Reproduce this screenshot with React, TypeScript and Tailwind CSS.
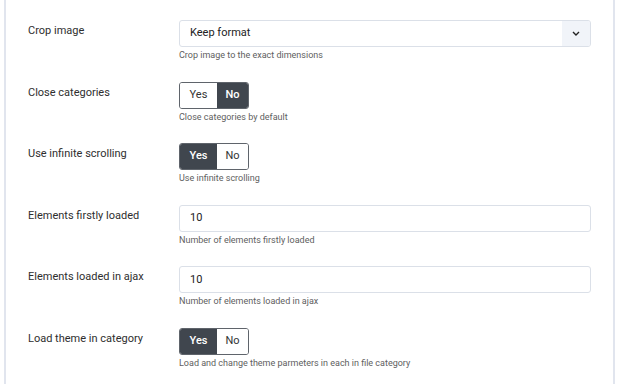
import React from 'react';

const font = { fontFamily: 'Roboto, "Liberation Sans", sans-serif' };

// --- Row ---
const Row: React.FC<{ label: string; help: string; children: React.ReactNode }> = ({ label, help, children }) => (
  <div className="flex h-[61.6px]">
    <div className="w-[151px] shrink-0 pt-[4px] text-[11px] leading-[14px] text-[#2e2e2e]">{label}</div>
    <div className="w-[412px] flex flex-col">
      {children}
      <div className="mt-[2px] text-[9px] leading-[12px] text-[#606060]">{help}</div>
    </div>
  </div>
);

// --- Toggle ---
const Toggle: React.FC<{ value: boolean }> = ({ value }) => {
  const on = 'bg-[#40464e] text-white font-medium';
  const off = 'bg-white text-[#333]';
  return (
    <div className="flex w-[70px] h-[27px] border border-[#5f646b] rounded-[3px] overflow-hidden text-[11px]">
      <div className={`w-[37px] flex items-center justify-center ${value ? on : off}`}>Yes</div>
      <div className={`flex-1 flex items-center justify-center ${value ? off : on}`}>No</div>
    </div>
  );
};

// --- Text input ---
const TextBox: React.FC<{ value: string }> = ({ value }) => (
  <div className="h-[27px] border border-[#dbe0e8] rounded-[3px] bg-white flex items-center pl-[10px] text-[11px] text-[#222]">
    {value}
  </div>
);

const SelectBox: React.FC<{ value: string }> = ({ value }) => (
  <div className="h-[27px] border border-[#dbe0e8] rounded-[3px] bg-white flex items-center text-[11px] text-[#222] overflow-hidden">
    <div className="flex-1 pl-[10px]">{value}</div>
    <div className="w-[28px] h-full bg-[#f1f4f9] flex items-center justify-center">
      <svg width="8" height="5" viewBox="0 0 8 5" fill="none">
        <path d="M1 1l3 3 3-3" stroke="#222" strokeWidth="1.4" />
      </svg>
    </div>
  </div>
);

export default function App() {
  return (
    <div className="w-[620px] h-[384px] bg-white overflow-hidden" style={font}>
      <div className="ml-[4px] w-[611px] h-full border-x-2 border-[#e1e5ee] pl-[22px] pt-[20px]">
        <Row label="Crop image" help="Crop image to the exact dimensions">
          <SelectBox value="Keep format" />
        </Row>
        <Row label="Close categories" help="Close categories by default">
          <Toggle value={false} />
        </Row>
        <Row label="Use infinite scrolling" help="Use infinite scrolling">
          <Toggle value={true} />
        </Row>
        <Row label="Elements firstly loaded" help="Number of elements firstly loaded">
          <TextBox value="10" />
        </Row>
        <Row label="Elements loaded in ajax" help="Number of elements loaded in ajax">
          <TextBox value="10" />
        </Row>
        <Row label="Load theme in category" help="Load and change theme parmeters in each in file category">
          <Toggle value={true} />
        </Row>
      </div>
    </div>
  );
}
